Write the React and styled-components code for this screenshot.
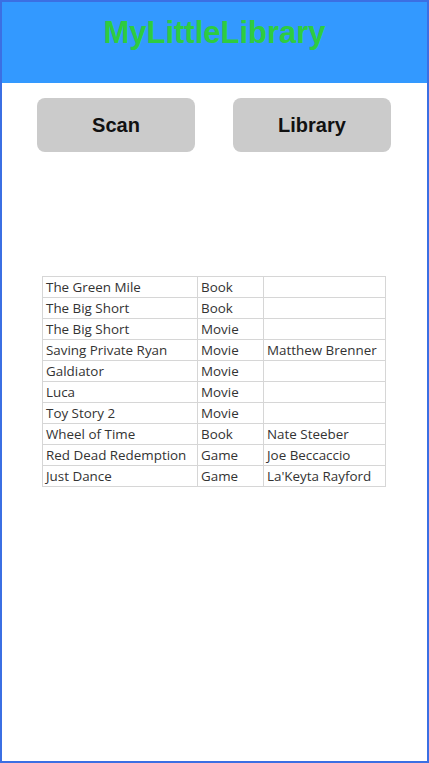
import React from "react";
import styled, { createGlobalStyle } from "styled-components";

const Global = createGlobalStyle`
  html, body { margin: 0; padding: 0; background: #fff; }
  * { box-sizing: border-box; }
`;

const Frame = styled.div`
  width: 429px;
  height: 763px;
  border: 2px solid #3b6fe3;
  display: flex;
  flex-direction: column;
  background: #fff;
  font-family: "Liberation Sans", Arial, sans-serif;
`;

const Header = styled.header`
  height: 81px;
  background: #3399ff;
  display: flex;
  justify-content: center;
  padding-top: 12px;
`;

const Title = styled.h1`
  margin: 0;
  color: #2ecc40;
  font-size: 31px;
  font-weight: bold;
  line-height: 38px;
`;

const ButtonRow = styled.div`
  display: flex;
  justify-content: space-between;
  padding: 15px 36px 0 35px;
`;

const NavButton = styled.button`
  width: 158px;
  height: 54px;
  border: none;
  border-radius: 8px;
  background: #cbcbcb;
  color: #111;
  font-family: "Liberation Sans", Arial, sans-serif;
  font-weight: bold;
  font-size: 20px;
`;

const TableWrap = styled.div`
  padding: 124px 0 0 40px;
`;

const Table = styled.table`
  border-collapse: collapse;
  font-family: "Open Sans", sans-serif;
  font-size: 13.4px;
  color: #333;
  border-top: 1px solid #9a9a9a;
`;

const Cell = styled.td`
  border: 1px solid #d6d6d6;
  height: 21px;
  padding: 1px 0 0 3px;
  width: ${(p) => p.$w}px;
  min-width: ${(p) => p.$w}px;
  max-width: ${(p) => p.$w}px;
  white-space: nowrap;
  overflow: hidden;
  line-height: 19px;
`;

const rows = [
  ["The Green Mile", "Book", ""],
  ["The Big Short", "Book", ""],
  ["The Big Short", "Movie", ""],
  ["Saving Private Ryan", "Movie", "Matthew Brenner"],
  ["Galdiator", "Movie", ""],
  ["Luca", "Movie", ""],
  ["Toy Story 2", "Movie", ""],
  ["Wheel of Time", "Book", "Nate Steeber"],
  ["Red Dead Redemption", "Game", "Joe Beccaccio"],
  ["Just Dance", "Game", "La'Keyta Rayford"],
];

export default function App() {
  return (
    <>
      <Global />
      <Frame>
        <Header>
          <Title>MyLittleLibrary</Title>
        </Header>
        <ButtonRow>
          <NavButton>Scan</NavButton>
          <NavButton>Library</NavButton>
        </ButtonRow>
        <TableWrap>
          <Table>
            <tbody>
              {rows.map((r, i) => (
                <tr key={i}>
                  <Cell $w={155}>{r[0]}</Cell>
                  <Cell $w={66}>{r[1]}</Cell>
                  <Cell $w={122}>{r[2]}</Cell>
                </tr>
              ))}
            </tbody>
          </Table>
        </TableWrap>
      </Frame>
    </>
  );
}
